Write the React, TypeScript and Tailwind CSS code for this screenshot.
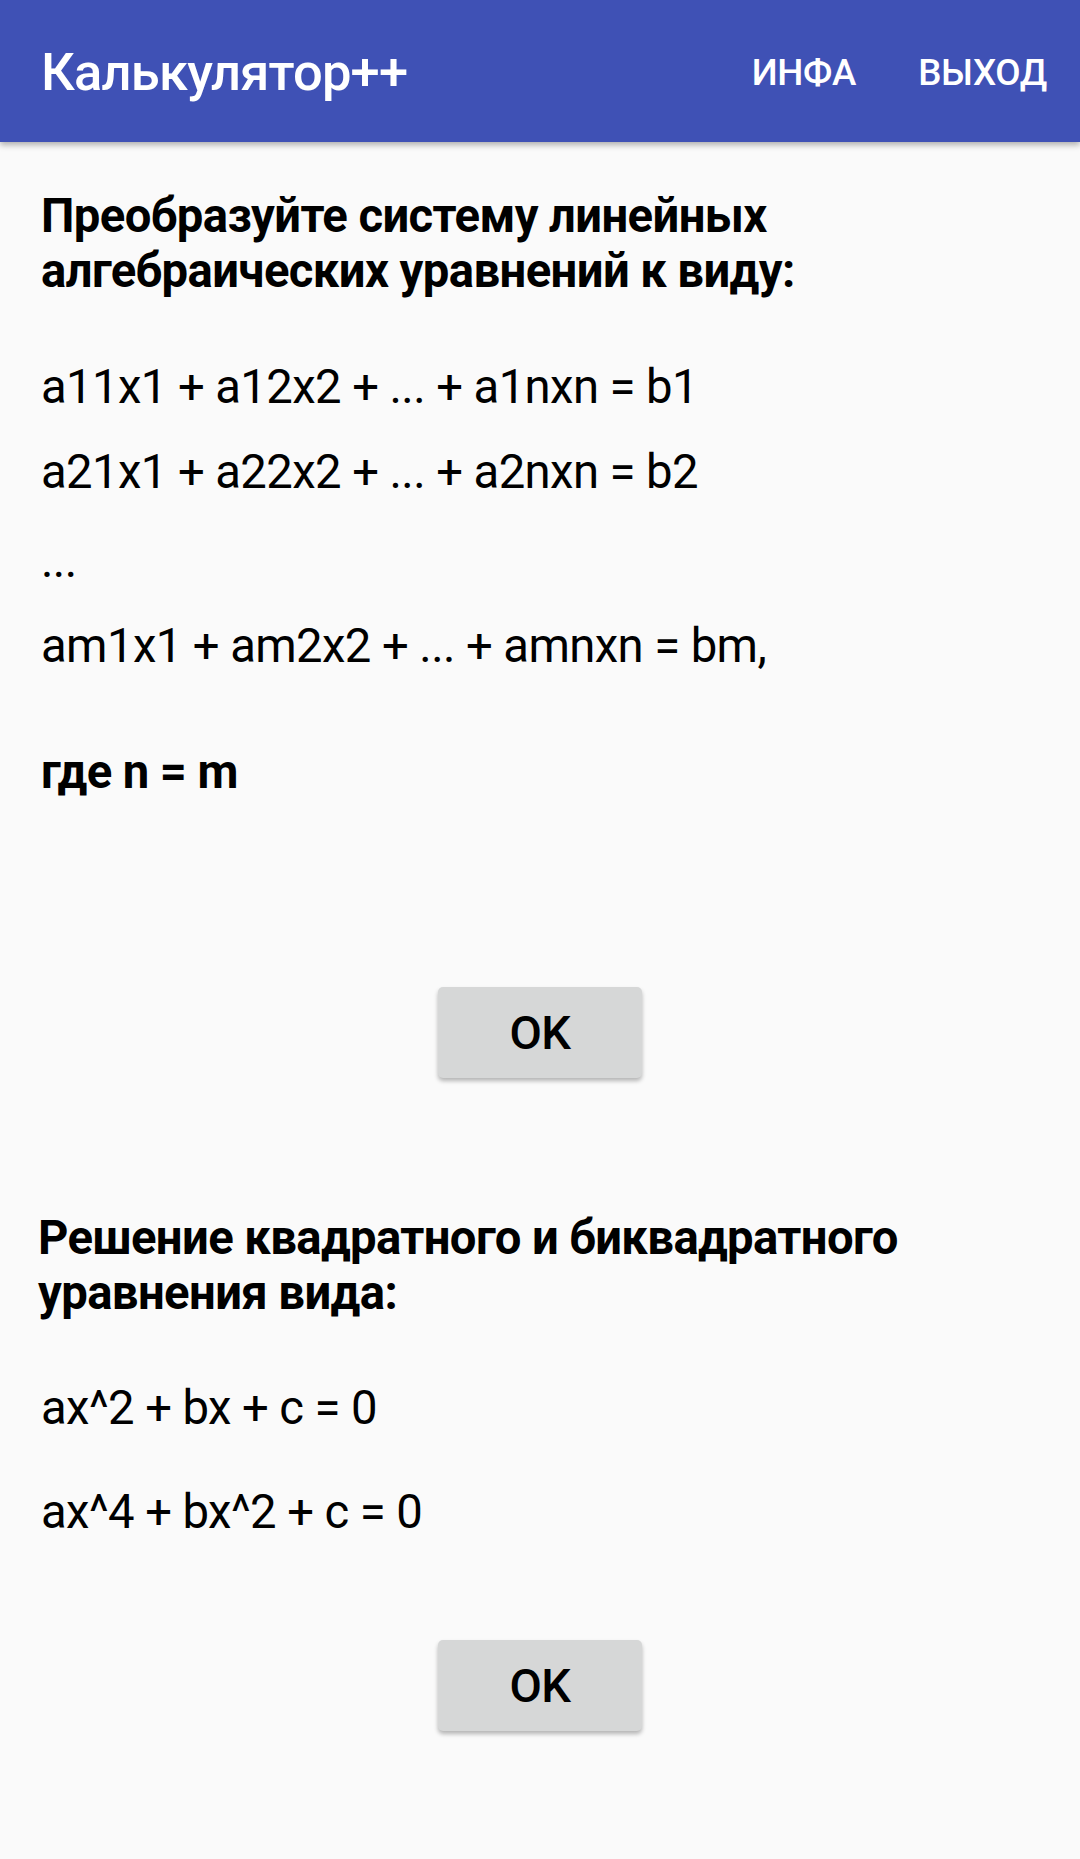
import React from 'react'

const roboto = { fontFamily: 'Roboto, "Noto Sans", sans-serif' }

function OkButton() {
  return (
    <div className="flex justify-center">
      <button className="w-[204px] h-[91px] rounded-[5px] bg-[#d6d7d7] text-black font-medium text-[47px] leading-none shadow-[0_3px_4px_rgba(0,0,0,0.28)]">
        OK
      </button>
    </div>
  )
}

export default function App() {
  return (
    <div className="min-h-[1859px] bg-[#fafafa] text-black" style={roboto}>
      {/* Toolbar */}
      <header className="relative z-10 h-[142px] pt-[4px] bg-[#3f51b5] flex items-center shadow-[0_3px_6px_rgba(0,0,0,0.3)]">
        <h1 className="pl-[41px] flex-1 text-white font-medium text-[52.5px] leading-[1.172] tracking-[-0.8px]">Калькулятор++</h1>
        <nav className="flex items-center pr-[1px]">
          <span className="pl-[36px] pr-[30px] text-white font-medium text-[36.75px] uppercase tracking-[-0.3px]">Инфа</span>
          <span className="px-[32px] text-white font-medium text-[36.75px] uppercase tracking-[-0.3px]">Выход</span>
        </nav>
      </header>

      <main className="text-[47.25px] leading-[55px] tracking-[-0.6px]">
        {/* Section 1 */}
        <section className="pl-[41px] pr-[30px]">
          <p className="pt-[47px] font-bold">
            Преобразуйте систему линейных
            <br />
            алгебраических уравнений к виду:
          </p>
          <p className="mt-[61px]">a11x1 + a12x2 + ... + a1nxn = b1</p>
          <p className="mt-[30px]">a21x1 + a22x2 + ... + a2nxn = b2</p>
          <p className="mt-[34px]">...</p>
          <p className="mt-[30px]">am1x1 + am2x2 + ... + amnxn = bm,</p>
          <p className="mt-[71px] font-bold">где n = m</p>
        </section>
        <div className="mt-[187px]">
          <OkButton />
        </div>

        {/* Section 2 */}
        <section className="pl-[38px] pr-[30px] mt-[133px]">
          <p className="font-bold">
            Решение квадратного и биквадратного
            <br />
            уравнения вида:
          </p>
          <p className="mt-[60px] pl-[3px]">ax^2 + bx + c = 0</p>
          <p className="mt-[49px] pl-[3px]">ax^4 + bx^2 + c = 0</p>
        </section>
        <div className="mt-[100px]">
          <OkButton />
        </div>
      </main>
    </div>
  )
}
